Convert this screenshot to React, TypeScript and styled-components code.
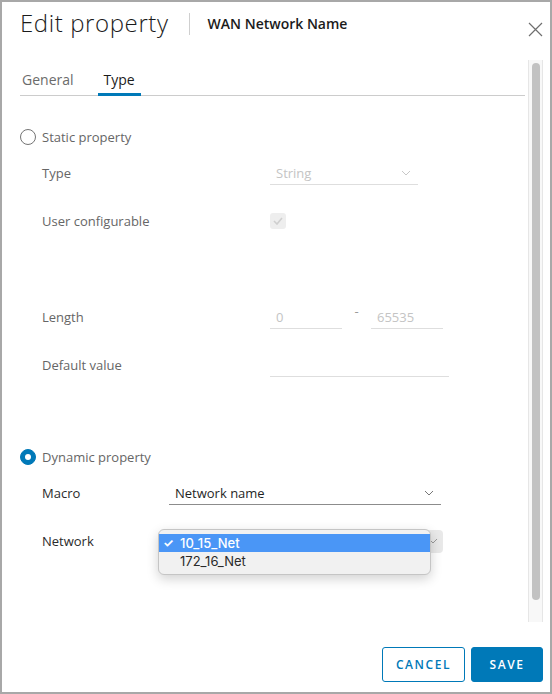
import React from "react";
import styled, { createGlobalStyle } from "styled-components";

const GlobalStyle = createGlobalStyle`
  html, body {
    margin: 0;
    padding: 0;
    background: #ffffff;
  }
  body {
    font-family: "Open Sans", "Liberation Sans", sans-serif;
  }
  * {
    box-sizing: border-box;
  }
`;

const BLUE = "#0079b8";

const Dialog = styled.div`
  width: 552px;
  height: 694px;
  border: 2px solid #a8a8a8;
  background: #fff;
  display: flex;
  flex-direction: column;
  padding: 0 7px 0 18px;
`;

const Header = styled.div`
  height: 58px;
  display: flex;
  align-items: flex-start;
  padding-top: 5px;
`;

const Title = styled.h1`
  margin: 0;
  font-size: 24px;
  font-weight: 300;
  line-height: 32px;
  color: #1b1b1b;
  letter-spacing: 0.6px;
`;

const Divider = styled.div`
  width: 1px;
  height: 22px;
  background: #cfcfcf;
  margin: 6px 18px 0 20px;
`;

const Subtitle = styled.div`
  font-size: 14px;
  font-weight: 600;
  line-height: 20px;
  color: #1b1b1b;
  margin-top: 7px;
`;

const CloseButton = styled.button`
  margin-left: auto;
  margin-top: 14px;
  width: 16px;
  height: 16px;
  padding: 0;
  border: none;
  background: none;
  display: flex;
  align-items: center;
  justify-content: center;
  cursor: pointer;
`;

const Body = styled.div`
  flex: 1;
  position: relative;
  overflow: hidden;
`;

const ScrollTrack = styled.div`
  position: absolute;
  top: 0;
  right: 0;
  bottom: 0;
  width: 15px;
  background: #f8f8f8;
  border-left: 1px solid #e6e6e6;
  border-right: 1px solid #e6e6e6;
`;

const ScrollThumb = styled.div`
  position: absolute;
  top: 3px;
  left: 3px;
  width: 8px;
  height: 537px;
  border-radius: 4px;
  background: #c2c2c2;
`;

const Content = styled.div`
  padding: 0 18px 0 0;
`;

const TabList = styled.div`
  display: flex;
  height: 36px;
  border-bottom: 1px solid #cccccc;
  gap: 18px;
`;

const Tab = styled.div<{ $active?: boolean }>`
  padding: 10px 6px 0;
  font-size: 14px;
  line-height: 20px;
  color: ${(p) => (p.$active ? "#1b1b1b" : "#6b6b6b")};
  box-shadow: ${(p) => (p.$active ? `inset 0 -3px 0 ${BLUE}` : "none")};
  height: 36px;
  &:first-child {
    margin-left: -4px;
  }
`;

const RadioRow = styled.label<{ $top: number }>`
  display: flex;
  align-items: center;
  height: 24px;
  margin-top: ${(p) => p.$top}px;
  gap: 6px;
  font-size: 13px;
  color: #666;
`;

const RadioCircle = styled.span<{ $checked?: boolean }>`
  width: 16px;
  height: 16px;
  border-radius: 50%;
  border: 1px solid ${(p) => (p.$checked ? BLUE : "#747474")};
  background: ${(p) => (p.$checked ? BLUE : "#fff")};
  display: flex;
  align-items: center;
  justify-content: center;
  &::after {
    content: "";
    display: ${(p) => (p.$checked ? "block" : "none")};
    width: 6px;
    height: 6px;
    border-radius: 50%;
    background: #fff;
  }
`;

const FieldRow = styled.div<{ $label: number }>`
  display: grid;
  grid-template-columns: ${(p) => p.$label}px 1fr;
  align-items: center;
  height: 48px;
  padding-left: 22px;
`;

const Label = styled.span<{ $dark?: boolean }>`
  font-size: 13px;
  color: ${(p) => (p.$dark ? "#2b2b2b" : "#666")};
`;

const Controls = styled.div`
  display: flex;
  align-items: center;
  position: relative;
`;

const LineBox = styled.div<{ $width: number; $enabled?: boolean }>`
  width: ${(p) => p.$width}px;
  height: 24px;
  border-bottom: 1px solid ${(p) => (p.$enabled ? "#8c8c8c" : "#dedede")};
  display: flex;
  align-items: center;
  justify-content: space-between;
  padding: 0 7px 0 6px;
  font-size: 13px;
  color: ${(p) => (p.$enabled ? "#1f1f1f" : "#c4c4c4")};
`;

const Dash = styled.span`
  width: 29px;
  text-align: center;
  font-size: 13px;
  color: #9a9a9a;
  margin-bottom: 12px;
`;

const Checkbox = styled.span`
  width: 16px;
  height: 16px;
  border-radius: 3px;
  background: #eeeeee;
  display: flex;
  align-items: center;
  justify-content: center;
`;

const NativeSelect = styled.div`
  width: 274px;
  height: 23px;
  border-radius: 4px;
  background: #e9e9e9;
  display: flex;
  align-items: center;
  justify-content: flex-end;
  padding-right: 5px;
`;

const Popup = styled.div`
  position: absolute;
  left: -11px;
  top: -1px;
  width: 273px;
  padding: 4px 0;
  background: #f1f1f1;
  border: 1px solid #c5c5c5;
  border-radius: 6px;
  box-shadow: 0 4px 12px rgba(0, 0, 0, 0.18);
  font-family: "Inter", "Liberation Sans", sans-serif;
`;

const Option = styled.div<{ $selected?: boolean }>`
  height: 18px;
  display: flex;
  align-items: center;
  font-size: 13px;
  font-weight: ${(p) => (p.$selected ? 500 : 400)};
  background: ${(p) => (p.$selected ? "#4a96f6" : "transparent")};
  color: ${(p) => (p.$selected ? "#fff" : "#2a2a2a")};
`;

const Check = styled.span`
  width: 21px;
  padding-left: 4px;
  font-size: 12px;
  font-weight: 700;
`;

const Footer = styled.div`
  display: flex;
  justify-content: flex-end;
  gap: 6px;
  padding: 25px 0 10px;
`;

const Button = styled.button<{ $primary?: boolean; $width: number }>`
  width: ${(p) => p.$width}px;
  height: 35px;
  border-radius: 3px;
  border: 1px solid ${BLUE};
  background: ${(p) => (p.$primary ? BLUE : "#fff")};
  color: ${(p) => (p.$primary ? "#fff" : BLUE)};
  font-family: "Open Sans", "Liberation Sans", sans-serif;
  font-size: 12px;
  font-weight: 600;
  letter-spacing: 0.13em;
  padding: 0;
  cursor: pointer;
`;

const Chevron: React.FC<{ color: string }> = ({ color }) => (
  <svg width="10" height="6" viewBox="0 0 10 6">
    <path d="M1 1l4 4 4-4" fill="none" stroke={color} strokeWidth="1" />
  </svg>
);

export default function App() {
  return (
    <>
      <GlobalStyle />
      <Dialog>
        <Header>
          <Title>Edit property</Title>
          <Divider />
          <Subtitle>WAN Network Name</Subtitle>
          <CloseButton aria-label="Close">
            <svg width="15" height="15" viewBox="0 0 15 15">
              <path d="M1 1l13 13M14 1L1 14" stroke="#6f6f6f" strokeWidth="1.2" />
            </svg>
          </CloseButton>
        </Header>
        <Body>
          <Content>
            <TabList>
              <Tab>General</Tab>
              <Tab $active>Type</Tab>
            </TabList>

            <RadioRow $top={29}>
              <RadioCircle />
              Static property
            </RadioRow>
            <FieldRow $label={228}>
              <Label>Type</Label>
              <Controls>
                <LineBox $width={148}>
                  String
                  <Chevron color="#c8c8c8" />
                </LineBox>
              </Controls>
            </FieldRow>
            <FieldRow $label={228}>
              <Label>User configurable</Label>
              <Controls>
                <Checkbox>
                  <svg width="10" height="8" viewBox="0 0 10 8">
                    <path d="M1 4l3 3 5-6" fill="none" stroke="#cfcfcf" strokeWidth="1.6" />
                  </svg>
                </Checkbox>
              </Controls>
            </FieldRow>
            <FieldRow $label={228} />
            <FieldRow $label={228}>
              <Label>Length</Label>
              <Controls>
                <LineBox $width={72}>0</LineBox>
                <Dash>-</Dash>
                <LineBox $width={72}>65535</LineBox>
              </Controls>
            </FieldRow>
            <FieldRow $label={228}>
              <Label>Default value</Label>
              <Controls>
                <LineBox $width={179} />
              </Controls>
            </FieldRow>

            <RadioRow $top={56}>
              <RadioCircle $checked />
              Dynamic property
            </RadioRow>
            <FieldRow $label={127}>
              <Label $dark>Macro</Label>
              <Controls>
                <LineBox $width={272} $enabled>
                  Network name
                  <Chevron color="#777" />
                </LineBox>
              </Controls>
            </FieldRow>
            <FieldRow $label={127}>
              <Label $dark>Network</Label>
              <Controls>
                <NativeSelect>
                  <Chevron color="#9a9a9a" />
                </NativeSelect>
                <Popup>
                  <Option $selected>
                    <Check>✓</Check>10_15_Net
                  </Option>
                  <Option>
                    <Check />
                    172_16_Net
                  </Option>
                </Popup>
              </Controls>
            </FieldRow>
          </Content>
          <ScrollTrack>
            <ScrollThumb />
          </ScrollTrack>
        </Body>
        <Footer>
          <Button $width={83}>CANCEL</Button>
          <Button $width={72} $primary>
            SAVE
          </Button>
        </Footer>
      </Dialog>
    </>
  );
}
